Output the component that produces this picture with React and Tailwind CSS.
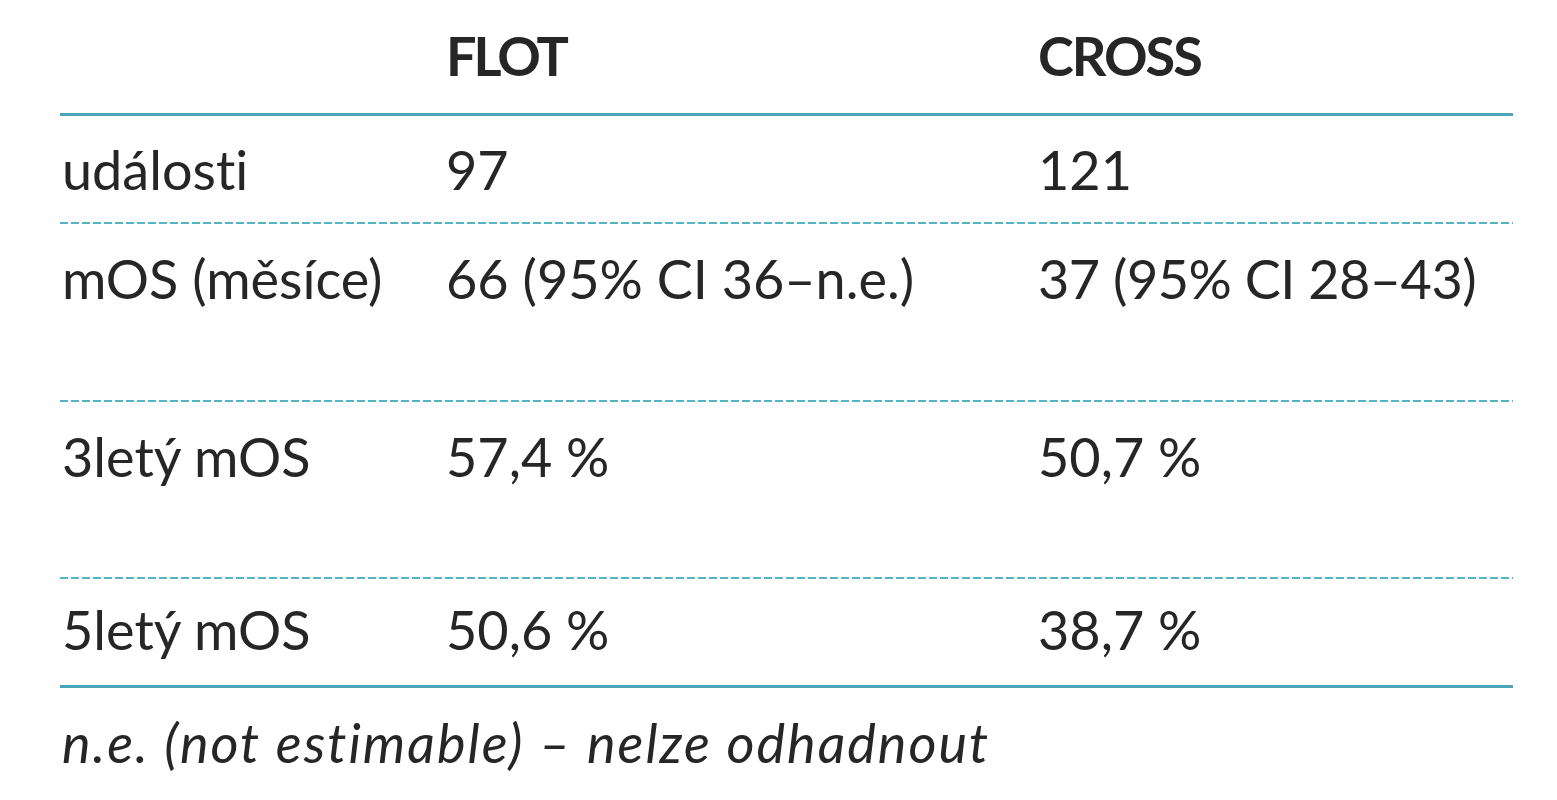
export default function App() {
  const dashed =
    "h-[2px] bg-[repeating-linear-gradient(to_right,#55b3c6_0px,#55b3c6_8px,transparent_8px,transparent_11px)]";
  const row = "grid grid-cols-[386px_592px_1fr] text-[54px] leading-[54px]";
  return (
    <div
      className="w-[1557px] h-[800px] bg-white text-[#262626] overflow-hidden [font-variant-ligatures:none]"
      style={{ fontFamily: "Lato, 'Open Sans', sans-serif" }}
    >
      <div className="ml-[60px] w-[1453px]">
        <div className={`${row} pt-[29px] pb-[30px] border-b-[3px] border-[#4aa5b8] font-bold`}>
          <div></div>
          <div className="tracking-[-3px]">FLOT</div>
          <div className="tracking-[-2px]">CROSS</div>
        </div>
        <div className={`${row} pt-[27px] pb-[25px]`}>
          <div className="pl-[2px]">události</div>
          <div>97</div>
          <div>121</div>
        </div>
        <div className={dashed}></div>
        <div className={`${row} pt-[28px] pb-[94px]`}>
          <div className="pl-[2px]">mOS (měsíce)</div>
          <div>66 (95% CI 36–n.e.)</div>
          <div className="tracking-[-0.5px]">37 (95% CI 28–43)</div>
        </div>
        <div className={dashed}></div>
        <div className={`${row} pt-[28px] pb-[93px]`}>
          <div className="pl-[2px]">3letý mOS</div>
          <div>57,4 %</div>
          <div>50,7 %</div>
        </div>
        <div className={dashed}></div>
        <div className={`${row} pt-[24px] pb-[28px] border-b-[3px] border-[#4aa5b8]`}>
          <div className="pl-[2px]">5letý mOS</div>
          <div>50,6 %</div>
          <div>38,7 %</div>
        </div>
        <div className="pt-[28px] pl-[2px] text-[54px] leading-[54px] italic tracking-[2px]">
          n.e. (not estimable) – nelze odhadnout
        </div>
      </div>
    </div>
  );
}
